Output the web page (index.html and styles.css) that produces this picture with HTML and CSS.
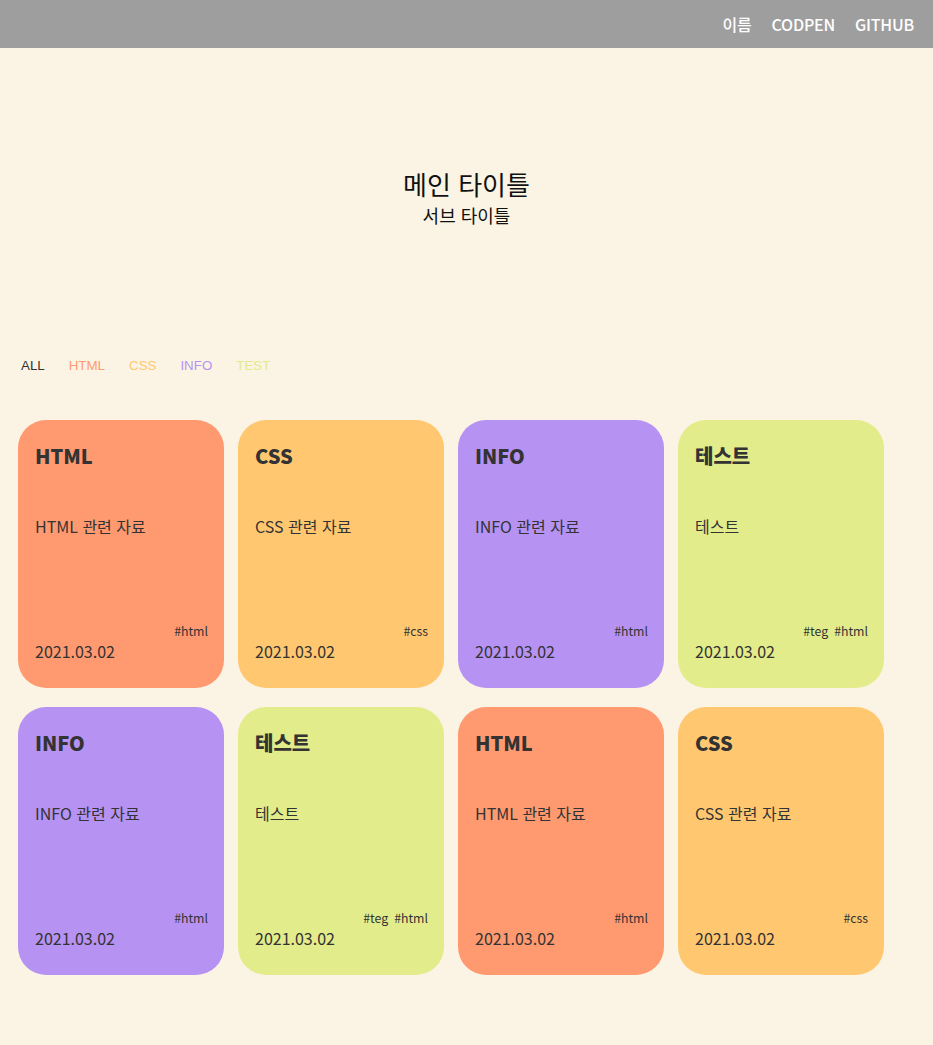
FILE: index.html
```html
<!DOCTYPE html>
<html lang="ko">
<head>
<meta charset="utf-8">
<title>Blog</title>
<link rel="stylesheet" href="styles.css">
</head>
<body>
<header class="topbar">
  <nav class="nav">
    <a class="nav-link" href="#">이름</a>
    <a class="nav-link" href="#">CODPEN</a>
    <a class="nav-link" href="#">GITHUB</a>
  </nav>
</header>
<section class="hero">
  <h1 class="hero-title">메인 타이틀</h1>
  <p class="hero-sub">서브 타이틀</p>
</section>
<div class="filters">
  <button class="filter f-all">ALL</button>
  <button class="filter f-html">HTML</button>
  <button class="filter f-css">CSS</button>
  <button class="filter f-info">INFO</button>
  <button class="filter f-test">TEST</button>
</div>
<main class="grid">
  <article class="card c-html">
    <h2 class="card-title">HTML</h2>
    <p class="card-desc">HTML 관련 자료</p>
    <div class="card-tags"><span>#html</span></div>
    <p class="card-date">2021.03.02</p>
  </article>
  <article class="card c-css">
    <h2 class="card-title">CSS</h2>
    <p class="card-desc">CSS 관련 자료</p>
    <div class="card-tags"><span>#css</span></div>
    <p class="card-date">2021.03.02</p>
  </article>
  <article class="card c-info">
    <h2 class="card-title">INFO</h2>
    <p class="card-desc">INFO 관련 자료</p>
    <div class="card-tags"><span>#html</span></div>
    <p class="card-date">2021.03.02</p>
  </article>
  <article class="card c-test">
    <h2 class="card-title">테스트</h2>
    <p class="card-desc">테스트</p>
    <div class="card-tags"><span>#teg</span><span>#html</span></div>
    <p class="card-date">2021.03.02</p>
  </article>
  <article class="card c-info">
    <h2 class="card-title">INFO</h2>
    <p class="card-desc">INFO 관련 자료</p>
    <div class="card-tags"><span>#html</span></div>
    <p class="card-date">2021.03.02</p>
  </article>
  <article class="card c-test">
    <h2 class="card-title">테스트</h2>
    <p class="card-desc">테스트</p>
    <div class="card-tags"><span>#teg</span><span>#html</span></div>
    <p class="card-date">2021.03.02</p>
  </article>
  <article class="card c-html">
    <h2 class="card-title">HTML</h2>
    <p class="card-desc">HTML 관련 자료</p>
    <div class="card-tags"><span>#html</span></div>
    <p class="card-date">2021.03.02</p>
  </article>
  <article class="card c-css">
    <h2 class="card-title">CSS</h2>
    <p class="card-desc">CSS 관련 자료</p>
    <div class="card-tags"><span>#css</span></div>
    <p class="card-date">2021.03.02</p>
  </article>
</main>
</body>
</html>
```

FILE: styles.css
```css
* { box-sizing: border-box; }
html, body { margin: 0; padding: 0; }
body {
  background: #fbf4e4;
  font-family: "Noto Sans CJK KR", "Noto Sans", sans-serif;
  color: #333;
  min-height: 1045px;
}
.topbar {
  height: 48px;
  background: #9e9e9e;
  display: flex;
  justify-content: flex-end;
  align-items: center;
  padding-right: 19px;
}
.nav { display: flex; gap: 20px; }
.nav-link {
  color: #fff;
  text-decoration: none;
  font-size: 16px;
  font-weight: 500;
  line-height: 22px;
  letter-spacing: -0.2px;
}
.hero {
  padding-top: 119px;
  text-align: center;
  color: #111;
}
.hero-title {
  margin: 0;
  font-size: 26px;
  font-weight: 400;
  line-height: 34px;
}
.hero-sub {
  margin: 1px 0 0;
  font-size: 18px;
  line-height: 26px;
}
.filters {
  margin-top: 128px;
  padding-left: 21px;
  display: flex;
  gap: 24px;
}
.filter {
  border: 0;
  background: none;
  padding: 0;
  font-family: "Liberation Sans", Arial, sans-serif;
  font-size: 13.33px;
  line-height: 20px;
  cursor: pointer;
}
.f-all { color: #333; }
.f-html { color: #ff9a72; }
.f-css { color: #ffc870; }
.f-info { color: #b692f3; }
.f-test { color: #e2ea8a; }
.grid {
  margin-top: 44px;
  padding-left: 18px;
  display: grid;
  grid-template-columns: repeat(4, 206px);
  column-gap: 14px;
  row-gap: 19px;
}
.card {
  height: 268px;
  border-radius: 28px;
  padding: 21px 16px 25px 17px;
  display: flex;
  flex-direction: column;
}
.c-html { background: #ff9a70; }
.c-css { background: #ffc870; }
.c-info { background: #b692f3; }
.c-test { background: #e3ec8b; }
.card-title {
  margin: 0;
  font-size: 20px;
  font-weight: 900;
  line-height: 30px;
}
.card-desc {
  margin: 43px 0 0;
  font-size: 16px;
  line-height: 24px;
}
.card-tags {
  margin-top: auto;
  margin-bottom: -1px;
  display: flex;
  justify-content: flex-end;
  gap: 6px;
  font-size: 12.3px;
  line-height: 18px;
}
.card-date {
  margin: 0;
  font-size: 16px;
  line-height: 24px;
}
```
